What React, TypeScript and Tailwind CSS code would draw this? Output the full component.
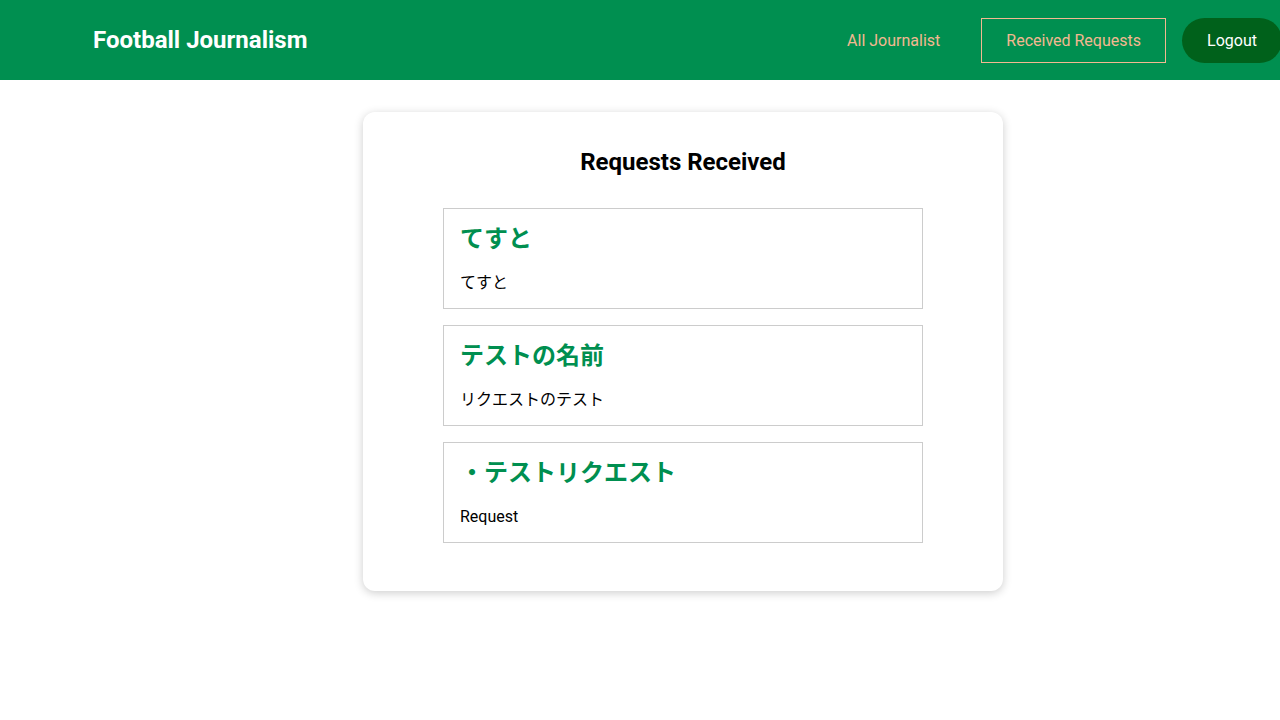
const requests = [
  { name: "てすと", message: "てすと" },
  { name: "テストの名前", message: "リクエストのテスト" },
  { name: "・テストリクエスト", message: "Request" },
];

export default function App() {
  return (
    <div
      className="min-h-screen bg-white overflow-hidden"
      style={{ fontFamily: "Roboto, 'Noto Sans CJK JP', sans-serif" }}
    >
      <header className="h-[80px] bg-[#008f50] flex items-center justify-between pl-[93px] overflow-hidden">
        <h1 className="text-white text-2xl font-bold">Football Journalism</h1>
        <nav className="flex items-center gap-4 mr-[-2px] mt-px">
          <a className="pl-[26px] pr-[24px] h-[45px] flex items-center text-base text-[#f3b891] border border-transparent">
            All Journalist
          </a>
          <a className="px-[24px] h-[45px] flex items-center text-base text-[#f3b891] border border-[#f3b891]">
            Received Requests
          </a>
          <button className="h-[45px] w-[100px] rounded-full bg-[#00611b] text-white text-base">
            Logout
          </button>
        </nav>
      </header>

      <main className="flex justify-center pt-8 pl-[86px]">
        <div className="w-[640px] bg-white rounded-xl shadow-[0_2px_10px_rgba(0,0,0,0.2)] px-20 pt-[34px] pb-12">
          <h2 className="text-2xl leading-8 font-bold text-black text-center">Requests Received</h2>
          <div className="mt-[30px] flex flex-col gap-4">
            {requests.map((r) => (
              <div key={r.name} className="border border-[#cccccc] px-4 pt-[14px] pb-[13px]">
                <h3 className="text-2xl leading-8 font-bold text-[#008f50]">{r.name}</h3>
                <p className="mt-[16px] text-base leading-6 text-black">{r.message}</p>
              </div>
            ))}
          </div>
        </div>
      </main>
    </div>
  );
}
